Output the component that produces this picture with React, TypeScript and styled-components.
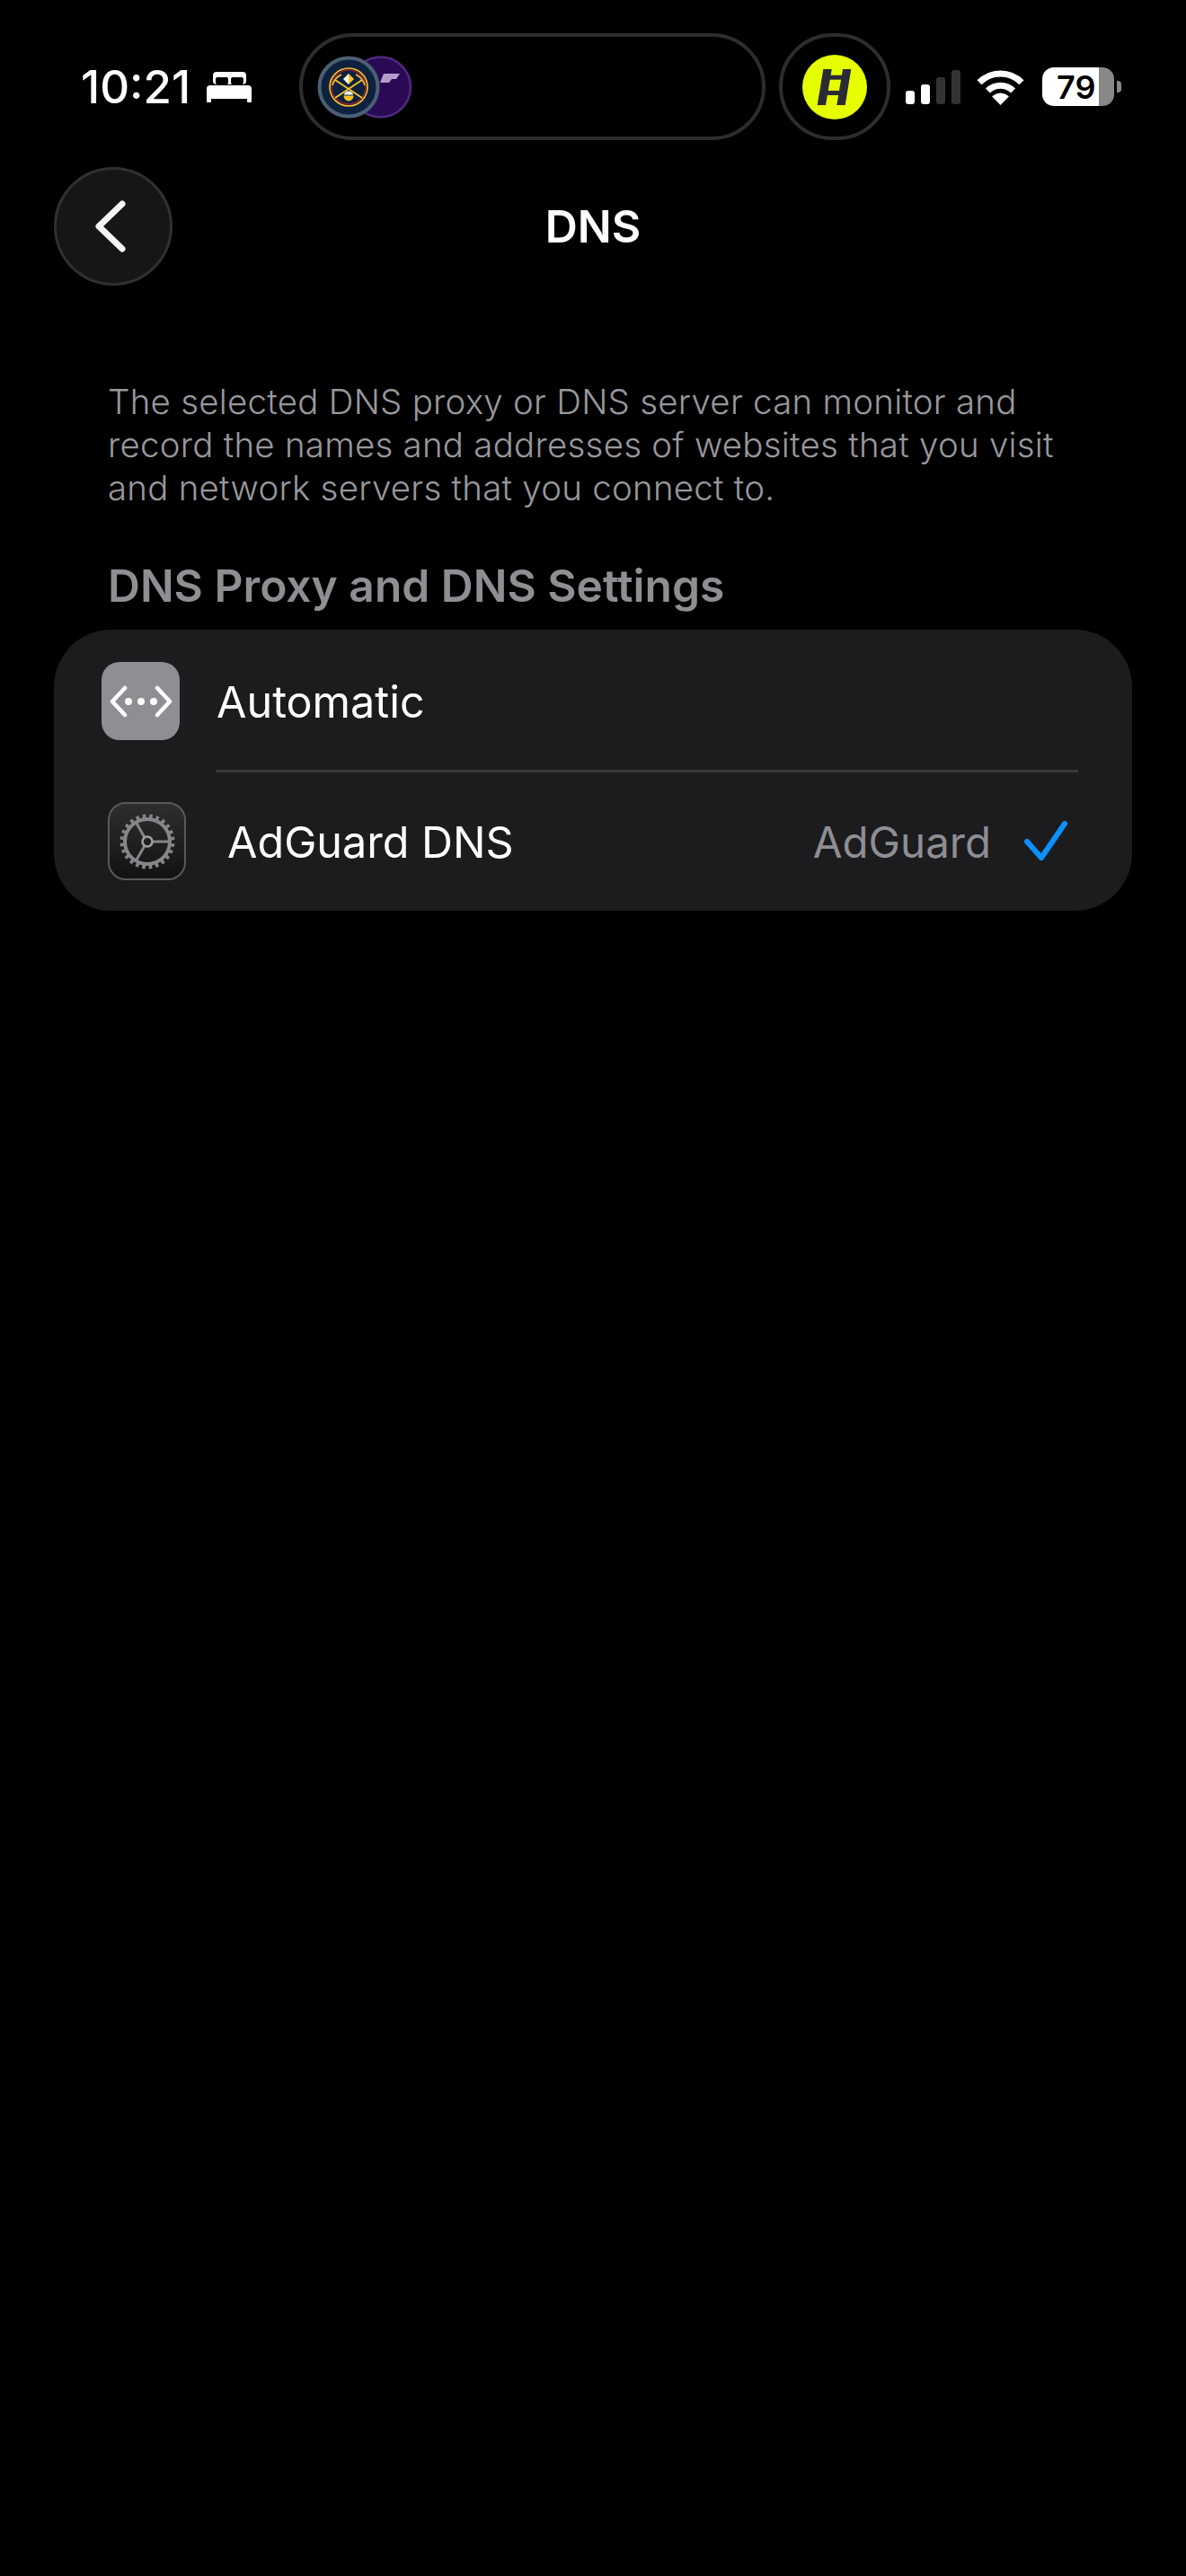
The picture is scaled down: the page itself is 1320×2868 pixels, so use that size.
import React from 'react';
import styled, { createGlobalStyle } from 'styled-components';

const GlobalStyle = createGlobalStyle`
  html, body {
    margin: 0;
    background: #000;
  }
  * {
    box-sizing: border-box;
  }
`;

const Wifi = () => (
  <svg width="53" height="40" viewBox="0 0 53 40" fill="none">
    <path d="M3 14.8A33 33 0 0 1 50 14.8" stroke="#fff" strokeWidth="7" />
    <path d="M12.4 24A20 20 0 0 1 40.6 24" stroke="#fff" strokeWidth="7" />
    <path d="M26.5 40L17 30.2Q26.5 23 36 30.2Z" fill="#fff" />
  </svg>
);

const Bed = () => (
  <svg width="50" height="34" viewBox="0 0 50 34">
    <rect x="7" y="0" width="37" height="14" rx="4" fill="#fff" />
    <rect x="10" y="6" width="14" height="8" rx="2" fill="#000" />
    <rect x="27" y="6" width="14" height="8" rx="2" fill="#000" />
    <rect x="0" y="15" width="50" height="15" rx="4" fill="#fff" />
    <rect x="0" y="24" width="5" height="10" rx="1" fill="#fff" />
    <rect x="45" y="24" width="5" height="10" rx="1" fill="#fff" />
  </svg>
);

const TeamLogos = () => (
  <svg width="106" height="70" viewBox="0 0 106 70">
    <circle cx="70.5" cy="35" r="33.5" fill="#2b0a55" stroke="#4f2a80" strokeWidth="2.5" />
    <path d="M74 20H92L88 26H83L80 30H70Z" fill="#b49ccb" />
    <circle cx="35" cy="35" r="32.5" fill="#0e2240" stroke="#4c6074" strokeWidth="4" />
    <circle cx="35" cy="35" r="21" fill="none" stroke="#fec524" strokeWidth="1.6" />
    <circle cx="35" cy="35" r="19" fill="none" stroke="#8b2131" strokeWidth="1.6" />
    <path d="M20 27L50 47M50 27L20 47" stroke="#fec524" strokeWidth="1.8" />
    <path d="M17 33Q19 25 27 21M53 33Q51 25 43 21" stroke="#fec524" strokeWidth="1.6" fill="none" />
    <path d="M35 20L41 26L35 32Z" fill="#fec524" />
    <path d="M35 20L29 26L35 32Z" fill="#fff" />
    <path d="M29.5 44.5H40.5A5.5 6 0 0 1 29.5 44.5Z" fill="#fec524" />
    <path d="M30 43.5A5 4 0 0 1 40 43.5Z" fill="#fff" />
  </svg>
);

const LadderMark = () => (
  <svg width="72" height="72" viewBox="0 0 72 72">
    <path d="M23.3 16H32.7L26 56H16.7Z" fill="#2a2a35" />
    <path d="M45 16H54.3L47.7 56H38.3Z" fill="#2a2a35" />
    <path d="M30 22.7H48V27.7H30Z" fill="#2a2a35" />
    <path d="M26 40H44V45H26Z" fill="#2a2a35" />
  </svg>
);

const Chevron = () => (
  <svg width="34" height="58" viewBox="0 0 34 58" fill="none">
    <path
      d="M30 4L4 29L30 54"
      stroke="#f4f4f4"
      strokeWidth="7"
      strokeLinecap="round"
      strokeLinejoin="round"
    />
  </svg>
);

const DnsGlyph = () => (
  <svg width="70" height="36" viewBox="0 0 70 36" fill="none">
    <path
      d="M17 3L3 18L17 33M53 3L67 18L53 33"
      stroke="#fff"
      strokeWidth="4.5"
      strokeLinecap="round"
      strokeLinejoin="round"
    />
    <circle cx="21" cy="18" r="4" fill="#fff" />
    <circle cx="35" cy="18" r="4" fill="#fff" />
    <circle cx="49" cy="18" r="4" fill="#fff" />
  </svg>
);

const toothAngles = Array.from({ length: 24 }, (_, i) => i * 15);

const GearGlyph = () => (
  <svg width="64" height="64" viewBox="0 0 64 64" fill="none">
    {toothAngles.map((angle) => (
      <path
        key={angle}
        d="M32 1.5V8"
        stroke="#85858a"
        strokeWidth="3.6"
        transform={`rotate(${angle + 8} 32 32)`}
      />
    ))}
    <circle cx="32" cy="32" r="25" stroke="#85858a" strokeWidth="4" />
    <path d="M37 32H57M29 27.5L19 10M29 36.5L19 54" stroke="#85858a" strokeWidth="3" />
    <circle cx="32" cy="32" r="5.5" stroke="#a0a0a4" strokeWidth="2.6" />
  </svg>
);

const Check = () => (
  <svg width="48" height="46" viewBox="0 0 48 46" fill="none">
    <path
      d="M3 23L19 41L45 3"
      stroke="#0a91ff"
      strokeWidth="6"
      strokeLinecap="round"
      strokeLinejoin="round"
    />
  </svg>
);

const App = () => {
  return (
    <>
      <GlobalStyle />
      <Page>
        <StatusBar>
          <Time>10:21</Time>
          <Bed />
          <Island>
            <TeamLogos />
          </Island>
          <RoundPill>
            <YellowBadge>
              <LadderMark />
            </YellowBadge>
          </RoundPill>
          <Signal>
            <Bar $h={15} $on />
            <Bar $h={22} $on />
            <Bar $h={30} />
            <Bar $h={38} />
          </Signal>
          <Wifi />
          <Battery>
            <BatteryBody>79</BatteryBody>
            <BatteryNub />
          </Battery>
        </StatusBar>

        <NavRow>
          <BackButton>
            <Chevron />
          </BackButton>
          <Title>DNS</Title>
        </NavRow>

        <Description>
          The selected DNS proxy or DNS server can monitor and
          <br />
          record the names and addresses of websites that you visit
          <br />
          and network servers that you connect to.
        </Description>
        <SectionTitle>DNS Proxy and DNS Settings</SectionTitle>

        <Card>
          <Row $pad={53} $gap={41} $top={36} $bottom={33}>
            <IconTile>
              <DnsGlyph />
            </IconTile>
            <RowLabel>Automatic</RowLabel>
          </Row>
          <Divider />
          <Row $pad={60} $gap={46} $top={33} $bottom={34}>
            <GearTile>
              <GearGlyph />
            </GearTile>
            <RowLabel>AdGuard DNS</RowLabel>
            <RowValue>AdGuard</RowValue>
            <Check />
          </Row>
        </Card>
      </Page>
    </>
  );
};

const Page = styled.div`
  width: 1320px;
  min-height: 2868px;
  background: #000;
  color: #fff;
  font-family: Inter, 'Liberation Sans', sans-serif;
  overflow: hidden;
`;

const StatusBar = styled.div`
  display: flex;
  align-items: center;
  height: 119px;
  margin-top: 37px;
  padding-left: 90px;
`;

const Time = styled.div`
  width: 120px;
  margin-right: 20px;
  font-size: 51px;
  font-weight: 500;
  white-space: nowrap;
`;

const Island = styled.div`
  display: flex;
  align-items: center;
  width: 519px;
  height: 119px;
  margin-left: 53px;
  padding-left: 16px;
  border: 4px solid #2d2d2d;
  border-radius: 60px;
`;

const RoundPill = styled.div`
  display: flex;
  align-items: center;
  justify-content: center;
  width: 124px;
  height: 119px;
  margin-left: 15px;
  margin-right: 17px;
  border: 4px solid #2d2d2d;
  border-radius: 60px;
`;

const YellowBadge = styled.div`
  width: 72px;
  height: 72px;
  border-radius: 50%;
  background: #e6ff00;
  line-height: 0;
`;

const Signal = styled.div`
  display: flex;
  align-items: flex-end;
  gap: 7px;
  height: 38px;
  margin-right: 18px;
`;

const Bar = styled.div<{ $h: number; $on?: boolean }>`
  width: 10px;
  height: ${(p) => p.$h}px;
  border-radius: 3px;
  background: ${(p) => (p.$on ? '#fff' : '#333')};
`;

const Battery = styled.div`
  display: flex;
  align-items: center;
  gap: 3px;
  margin-left: 20px;
`;

const BatteryBody = styled.div`
  display: flex;
  align-items: center;
  width: 80px;
  height: 43px;
  padding-left: 16px;
  border-radius: 13px;
  background: linear-gradient(to right, #fff 63px, #888 63px);
  color: #000;
  font-size: 36px;
  font-weight: 600;
`;

const BatteryNub = styled.div`
  width: 5px;
  height: 13px;
  border-radius: 0 4px 4px 0;
  background: #888;
`;

const NavRow = styled.div`
  display: grid;
  grid-template-columns: 132px 1fr 132px;
  align-items: center;
  margin-top: 30px;
  padding: 0 60px;
`;

const BackButton = styled.div`
  display: flex;
  align-items: center;
  justify-content: center;
  width: 132px;
  height: 132px;
  padding-right: 6px;
  border: 3px solid #303030;
  border-radius: 50%;
  background: #161616;
`;

const Title = styled.div`
  text-align: center;
  font-size: 50px;
  font-weight: 600;
`;

const Description = styled.p`
  margin: 105px 0 0;
  padding-left: 120px;
  color: #98989d;
  font-size: 38.4px;
  font-weight: 300;
  letter-spacing: 0.28px;
  line-height: 48px;
  white-space: nowrap;
`;

const SectionTitle = styled.h2`
  margin: 57px 0 0;
  padding-left: 120px;
  color: #8e8e93;
  font-size: 49.7px;
  font-weight: 600;
  line-height: 56px;
`;

const Card = styled.div`
  width: 1200px;
  margin: 21px 0 0 60px;
  border-radius: 64px;
  background: #1c1c1e;
`;

const Row = styled.div<{ $pad: number; $gap: number; $top: number; $bottom: number }>`
  display: flex;
  align-items: center;
  gap: ${(p) => p.$gap}px;
  padding: ${(p) => p.$top}px 72px ${(p) => p.$bottom}px ${(p) => p.$pad}px;
`;

const IconTile = styled.div`
  display: flex;
  align-items: center;
  justify-content: center;
  width: 87px;
  height: 87px;
  border-radius: 20px;
  background: #8e8e93;
`;

const GearTile = styled.div`
  display: flex;
  align-items: center;
  justify-content: center;
  width: 87px;
  height: 87px;
  border: 2px solid #5a5a5c;
  border-radius: 20px;
  background: linear-gradient(to bottom, #2e2e2e, #121212);
`;

const RowLabel = styled.div`
  flex: 1;
  padding-top: 2px;
  font-size: 48.5px;
  font-weight: 400;
`;

const RowValue = styled.div`
  margin-right: -9px;
  padding-top: 2px;
  color: #8e8e93;
  font-size: 47.5px;
`;

const Divider = styled.div`
  width: 960px;
  height: 3px;
  margin-left: 180px;
  background: #38383a;
`;

export default App;
